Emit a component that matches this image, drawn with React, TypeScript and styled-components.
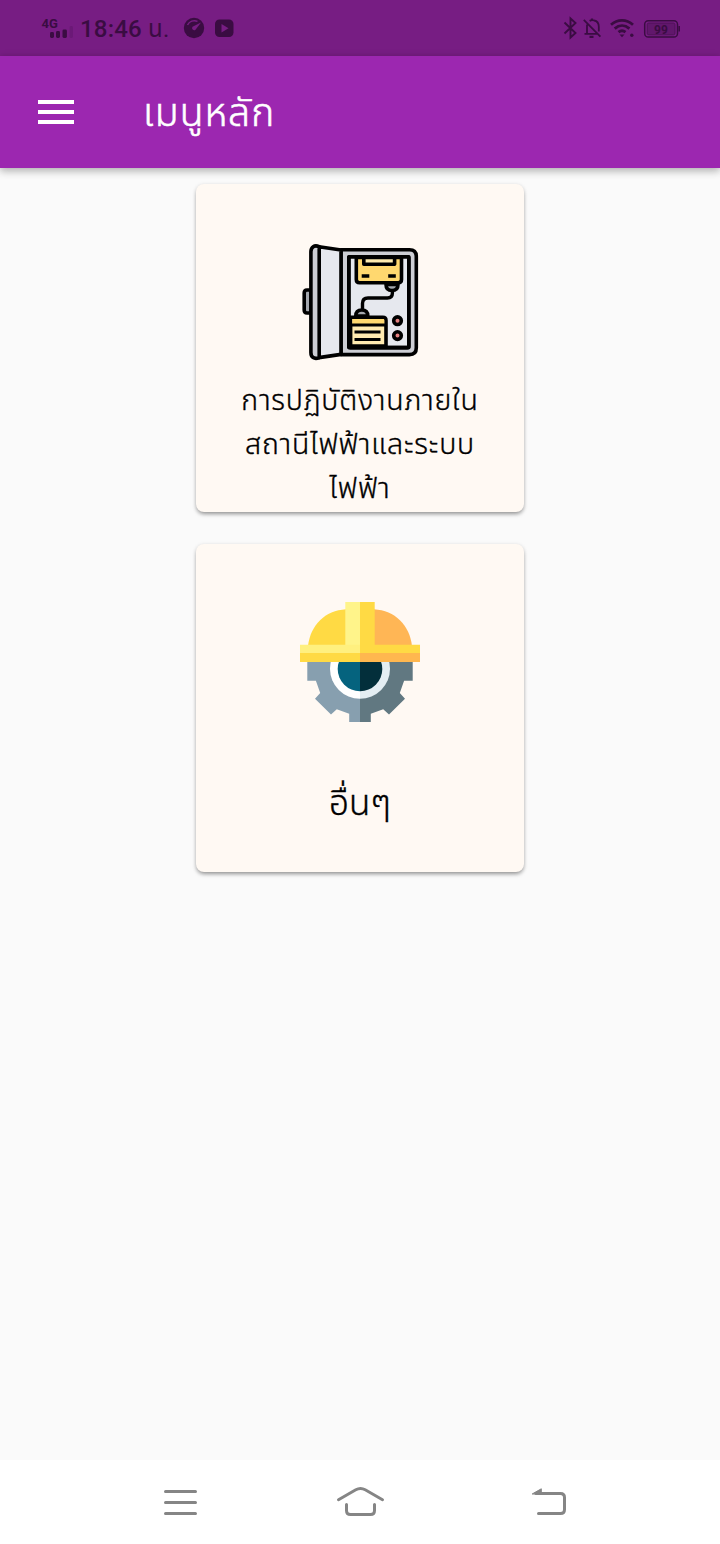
import React from "react";
import styled, { createGlobalStyle } from "styled-components";

const GlobalStyle = createGlobalStyle`
  html, body { margin: 0; padding: 0; }
  body { background: #fafafa; font-family: "Noto Sans Thai", "Kanit", "Noto Sans", sans-serif; }
  * { box-sizing: border-box; }
  svg { display: block; flex: none; }
`;

const Screen = styled.div`
  width: 720px;
  height: 1544px;
  display: flex;
  flex-direction: column;
  overflow: hidden;
  background: #fafafa;
`;

const StatusBar = styled.div`
  height: 56px;
  flex: none;
  display: flex;
  align-items: center;
  padding: 0 40px;
  background: #771d83;
  color: #3a0c42;
`;

const Clock = styled.span`
  width: 102px;
  margin-left: 6px;
  padding-top: 2px;
  font: 500 24px/28px Roboto, "Noto Sans Thai", sans-serif;
  letter-spacing: 0.2px;
  white-space: nowrap;
`;

const ClockUnit = styled.span`
  font-weight: 400;
`;

const Spacer = styled.div`
  flex: 1;
`;

const AppBar = styled.header`
  height: 112px;
  flex: none;
  display: flex;
  align-items: center;
  padding-left: 38px;
  background: #9c27b0;
  color: #fff;
  box-shadow: 0 2px 8px rgba(0, 0, 0, 0.24), 0 4px 8px rgba(0, 0, 0, 0.1);
`;

const Title = styled.h1`
  margin: 0 0 0 69px;
  padding-top: 5px;
  font-size: 39px;
  line-height: 60px;
  font-weight: 300;
  letter-spacing: 1px;
  -webkit-text-stroke: 0.6px currentColor;
  white-space: nowrap;
`;

const Content = styled.main`
  flex: 1;
  display: flex;
  flex-direction: column;
  align-items: center;
  gap: 32px;
  padding-top: 16px;
`;

const Card = styled.section`
  width: 328px;
  height: 328px;
  flex: none;
  display: flex;
  flex-direction: column;
  align-items: center;
  padding-top: 58px;
  border-radius: 8px;
  background: #fff9f3;
  color: #000;
  box-shadow: 0 3px 4px -1px rgba(0, 0, 0, 0.34), 0 1px 4px rgba(0, 0, 0, 0.14);
`;

const Label = styled.div<{ $size: number; $gap: number; $spacing?: number }>`
  margin-top: ${(p) => p.$gap}px;
  font-size: ${(p) => p.$size}px;
  line-height: 44px;
  font-weight: 300;
  letter-spacing: ${(p) => p.$spacing ?? 0}px;
  -webkit-text-stroke: 0.35px currentColor;
  text-align: center;
`;

const Line = styled.span`
  display: block;
  white-space: nowrap;
`;

const NavBar = styled.nav`
  height: 84px;
  flex: none;
  display: flex;
  align-items: center;
  padding-left: 160px;
  background: #fff;
`;

const NavButton = styled.span<{ $width: number; $after?: number }>`
  width: ${(p) => p.$width}px;
  margin-right: ${(p) => p.$after ?? 0}px;
`;

const StatusLeftIcon = () => (
  <svg width="34" height="28" viewBox="40 14 34 28" fill="#3a0c42">
    <text x="41.5" y="28" fontFamily="Roboto" fontSize="13" fontWeight="700">4G</text>
    <rect x="50" y="32" width="4" height="6" rx="1.4" />
    <rect x="56" y="31" width="4" height="7" rx="1.4" />
    <rect x="62.5" y="29.5" width="4.4" height="8.5" rx="1.4" />
    <rect x="69.5" y="26" width="3.5" height="12" rx="1.4" opacity=".18" />
  </svg>
);

const NotificationIcons = () => (
  <svg width="54" height="28" viewBox="182 14 54 28">
    <circle cx="194" cy="28" r="10.2" fill="#3a0c42" />
    <path d="M187.5 25a7.6 7.6 0 0 1 10-3.6" fill="none" stroke="#771d83" strokeWidth="1.5" />
    <path d="M201 22.5l-5.5 7.2a2.1 2.1 0 0 1-3-2.9z" fill="#771d83" />
    <rect x="215" y="19.5" width="18.5" height="17.5" rx="4.5" fill="#3a0c42" />
    <path d="M221.5 24v8.5l7-4.2z" fill="#771d83" />
  </svg>
);

const SystemIcons = () => (
  <svg width="118" height="28" viewBox="562 14 118 28" fill="none" stroke="#3a0c42" strokeWidth="2">
    <path d="M564.5 22.5l11 10.5-5 4.5v-19l5 4.5-11 10.5" strokeWidth="1.9" />
    <path d="M587 24.5v8.8M598.8 31.5v-4.7c0-3.5-2-5.8-4.6-6.3-1.8-.7-3.4-.3-4.6.4M584.5 33.8h12.5M583.8 19.8l16.6 16.8" strokeWidth="1.8" />
    <path d="M592 18.5v2M589.5 36.8h4" strokeWidth="2.2" />
    <path d="M611 24.8c6.5-5.8 15.5-5.8 22 0M614.7 28.6c4.5-4 10.2-4 14.7 0M618.5 32.2c2.2-1.8 4.8-1.8 7 0" strokeWidth="2.8" />
    <path d="M619.5 34.5h5l-2.5 2.8z" fill="#3a0c42" stroke="none" />
    <circle cx="631.8" cy="35.3" r="1.7" fill="#3a0c42" stroke="none" />
    <rect x="644.7" y="20.7" width="32.8" height="16.4" rx="3.6" strokeWidth="1.5" />
    <rect x="647.2" y="23" width="27.8" height="11.8" rx="1.6" fill="#61176c" stroke="#4a1053" strokeWidth=".8" />
    <path d="M679.2 26v5.5" strokeWidth="1.5" />
    <text x="654" y="33.6" fill="#3a0c42" stroke="none" fontFamily="Roboto" fontSize="12" fontWeight="700">99</text>
  </svg>
);

const MenuIcon = () => (
  <svg width="36" height="24" viewBox="0 0 36 24" fill="#fff">
    <path d="M0 0h36v4H0zM0 10h36v4H0zM0 20h36v4H0z" />
  </svg>
);

const CabinetIcon = () => (
  <svg width="120" height="120" viewBox="300 242 120 120" stroke="#000" strokeWidth="3.6" strokeLinejoin="round" strokeLinecap="round">
    <path d="M341 249.8h68.5q6.8 0 6.8 6.8v91.2q0 6.8-6.8 6.8H341z" fill="#cdced4" />
    <rect x="348.8" y="256.8" width="60" height="90.8" rx="1.5" fill="#e6e8ee" />
    <path d="M311 290h-4q-2.8 0-2.8 3v17q0 3 2.8 3h4z" fill="#a5a8ae" />
    <path d="M319 246.8l22 3.2v104.4l-22 3.2z" fill="#e6e8ee" />
    <path d="M319.2 246.6c-5-2-8.3.4-8.3 5.2v100.6c0 4.8 3.3 7.2 8.3 5.2z" fill="#cdced4" />
    <path d="M356.3 257.5v22q0 3.2 3.2 3.2h38.8q3.2 0 3.2-3.2v-22z" fill="#ffd86f" />
    <path d="M363.8 257.5v6.8h30.8v-6.8z" fill="#ffecb0" />
    <path d="M363.5 276h4M390 276h4" strokeLinecap="square" />
    <path d="M386 284.5q0 6 6 6t6-6z" fill="#a5a8ae" />
    <path d="M392.4 292v1q0 5-5 5H368q-5.5 0-5.5 5.5v5" fill="none" strokeWidth="3.4" />
    <path d="M355.8 316q0-6 6-6t6 6z" fill="#a5a8ae" />
    <path d="M350.6 317.2h32.2q3.2 0 3.2 3.2v25.6h-35.4z" fill="#ffeab0" />
    <path d="M352.3 319h31q1 0 1 1v4h-32z" fill="#ffd86f" stroke="none" />
    <path d="M349 325h36" strokeWidth="2.8" />
    <path d="M354.5 332h26M354.5 339.4h26" strokeLinecap="butt" strokeWidth="3" />
    <circle cx="397.5" cy="320.7" r="3.8" fill="#e58080" />
    <circle cx="397.5" cy="335.6" r="3.8" fill="#e58080" />
    <path d="M348.8 256.8h60v90.8h-60z" fill="none" />
  </svg>
);

const HelmetIcon = () => (
  <svg width="120" height="120" viewBox="300 602 120 120">
    <path d="M307.3 660v20.7h8.6l4.3 12.4-5.2 5.6 16 15.8 5.8-5.3 12.4 4.6v8.2H360v-62z" fill="#879faf" />
    <path d="M412.7 660v20.7h-8.6l-4.3 12.4 5.2 5.6-16 15.8-5.8-5.3-12.4 4.6v8.2H360v-62z" fill="#617881" />
    <path d="M360 638.7a30 30 0 0 0 0 60z" fill="#fff" />
    <path d="M360 638.7a30 30 0 0 1 0 60z" fill="#e4eef3" />
    <path d="M360 646.7a22.3 22.3 0 0 0 0 44.6z" fill="#05637e" />
    <path d="M360 646.7a22.3 22.3 0 0 1 0 44.6z" fill="#032f3b" />
    <path d="M308 646C310.5 625 325 610.5 346 609.3V646z" fill="#ffda44" />
    <path d="M412 646C409.5 625 395 610.5 374 609.3V646z" fill="#ffb655" />
    <path d="M345.3 602H360v44h-14.7z" fill="#fff48a" />
    <path d="M360 602h14.7v44H360z" fill="#ffda44" />
    <path d="M300 644.7h60V654h-60z" fill="#fff07f" />
    <path d="M360 644.7h60V654h-60z" fill="#ffda44" />
    <path d="M300 653h60v9h-60z" fill="#ffda44" />
    <path d="M360 653h60v9h-60z" fill="#ffb74f" />
  </svg>
);

const RecentsIcon = () => (
  <svg width="40" height="40" viewBox="160 1482 40 40" stroke="#858585" strokeWidth="3" strokeLinecap="round">
    <path d="M165.5 1491.5h30M165.5 1502.5h30M165.5 1513.5h30" />
  </svg>
);

const HomeIcon = () => (
  <svg width="52" height="40" viewBox="334 1482 52 40" fill="none" stroke="#858585" strokeWidth="3" strokeLinecap="round">
    <path d="M338.5 1499.7l17.3-10q4.7-2.6 9.4 0l17.3 10" />
    <path d="M346.5 1504.5v6q0 4 4 4h20q4 0 4-4v-6" />
  </svg>
);

const BackIcon = () => (
  <svg width="40" height="40" viewBox="528 1482 40 40" fill="none" stroke="#858585" strokeWidth="3" strokeLinecap="round">
    <path d="M536 1493.4h24.5q4 0 4 4v12q0 4-4 4h-22" />
    <path d="M532.5 1493.8l8.8-5v5z" fill="#858585" strokeWidth="1" strokeLinejoin="round" />
  </svg>
);

export default function App() {
  return (
    <Screen>
      <GlobalStyle />
      <StatusBar>
        <StatusLeftIcon />
        <Clock>18:46 <ClockUnit>น.</ClockUnit></Clock>
        <NotificationIcons />
        <Spacer />
        <SystemIcons />
      </StatusBar>
      <AppBar>
        <MenuIcon />
        <Title>เมนูหลัก</Title>
      </AppBar>
      <Content>
        <Card>
          <CabinetIcon />
          <Label $size={28.5} $gap={18} $spacing={0.8}>
            <Line>การปฏิบัติงานภายใน</Line>
            <Line>สถานีไฟฟ้าและระบบ</Line>
            <Line>ไฟฟ้า</Line>
          </Label>
        </Card>
        <Card>
          <HelmetIcon />
          <Label $size={35} $gap={61}>
            <Line>อื่นๆ</Line>
          </Label>
        </Card>
      </Content>
      <NavBar>
        <NavButton $width={40} $after={134}><RecentsIcon /></NavButton>
        <NavButton $width={52} $after={142}><HomeIcon /></NavButton>
        <NavButton $width={40}><BackIcon /></NavButton>
      </NavBar>
    </Screen>
  );
}
